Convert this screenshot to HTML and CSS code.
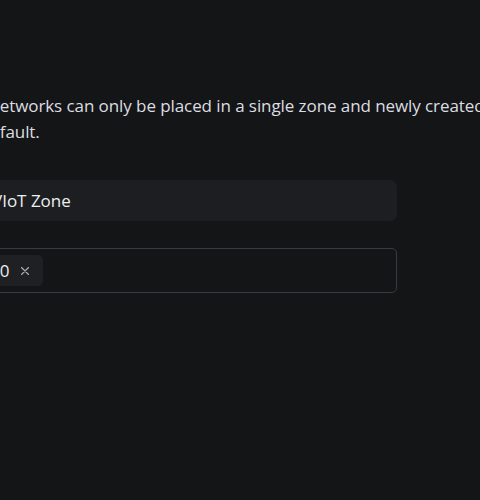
FILE: index.html
```html
<!DOCTYPE html>
<html lang="en">
<head>
<meta charset="utf-8">
<link rel="stylesheet" href="styles.css">
<title>Zone</title>
</head>
<body>
<div class="viewport">
  <form class="form">
    <p class="desc">Networks can only be placed in a single zone and newly created networks will be placed in this zone by<br>default.</p>
    <div class="field">
      <input class="text-input" type="text" value="VIoT Zone">
    </div>
    <div class="field field-multi">
      <div class="multi">
        <span class="chip"><span class="chip-label">10</span><svg class="chip-x" width="8" height="8" viewBox="0 0 8 8" aria-hidden="true"><path d="M0.5 0.5L7.5 7.5M7.5 0.5L0.5 7.5" stroke="#a3a5aa" stroke-width="1.4" stroke-linecap="round"/></svg></span>
      </div>
    </div>
  </form>
</div>
</body>
</html>
```
FILE: styles.css
```css
html, body {
  margin: 0;
  padding: 0;
  background: #141517;
  height: 100%;
  overflow: hidden;
}
.viewport {
  width: 480px;
  height: 500px;
  overflow: hidden;
}
.form {
  margin-left: -20px;
  width: 417px;
  padding-top: 93px;
  font-family: "Open Sans", "Noto Sans", sans-serif;
  color: #dcdde0;
}
.desc {
  margin: 0;
  width: 1000px;
  font-size: 17px;
  line-height: 26px;
  text-indent: 7px;
  letter-spacing: -0.08px;
}
.field {
  margin-top: 35px;
}
.field-multi {
  margin-top: 27px;
}
.text-input {
  display: block;
  box-sizing: border-box;
  width: 100%;
  height: 41px;
  margin: 0;
  padding: 0 12px 0 12px;
  border: 0;
  border-radius: 7px;
  background: #1d1e21;
  color: #eceef0;
  font: inherit;
  font-size: 17px;
  outline: none;
}
.multi {
  box-sizing: border-box;
  height: 45px;
  border: 1px solid #393b40;
  border-radius: 5px;
  display: flex;
  align-items: center;
  padding: 0 4px;
}
.chip {
  display: inline-flex;
  align-items: center;
  box-sizing: border-box;
  height: 31px;
  width: 58px;
  padding: 0 0 0 5px;
  border-radius: 5px;
  background: #1f2023;
  font-size: 17px;
  color: #eceef0;
}
.chip-x {
  margin-left: 12px;
  flex: none;
}
```
